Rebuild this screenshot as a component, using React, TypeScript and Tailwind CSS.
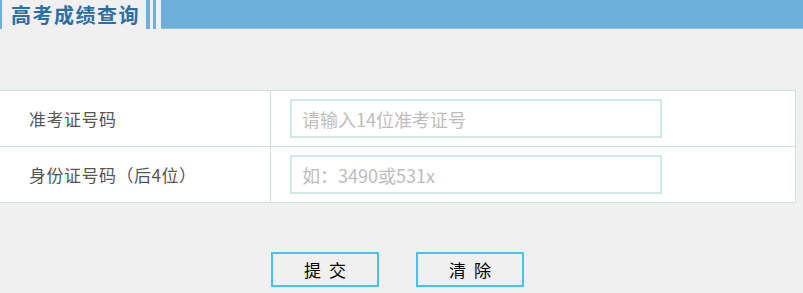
export default function App() {
  const rows = [
    { label: "准考证号码", placeholder: "请输入14位准考证号" },
    { label: "身份证号码（后4位）", placeholder: "如：3490或531x" },
  ];

  return (
    <div className="w-[803px] h-[293px] overflow-hidden bg-[#f0f0f0] font-['Microsoft_YaHei','Noto_Sans_CJK_SC',sans-serif]">
      {/* header strip */}
      <div className="flex h-[29px] items-stretch">
        <div className="w-[2px] bg-[#6fafdc]" />
        <div className="w-[144px] flex items-center pl-[9px] text-[20px] font-bold tracking-[1.5px] text-[#2b6ea3] leading-none">
          高考成绩查询
        </div>
        <div className="w-[4px] bg-[#6fafdc]" />
        <div className="w-[3px]" />
        <div className="w-[3px] bg-[#6fafdc]" />
        <div className="w-[5px]" />
        <div className="flex-1 bg-[#6fafdc] border-b border-[#8fc0e3]" />
      </div>

      {/* form table */}
      <div className="mt-[61px] w-[796px] bg-white border border-l-0 border-[#cde3e3]">
        {rows.map((row, i) => (
          <div
            key={i}
            className={`grid grid-cols-[270px_1fr] ${i > 0 ? "border-t border-[#cde3e3]" : ""}`}
          >
            <div className="flex items-center pl-[29px] text-[17px] tracking-[0.5px] text-[#555]">
              {row.label}
            </div>
            <div className="border-l border-[#cde3e3] py-[8px] pl-[19px]">
              <input
                className="w-[372px] h-[39px] border-2 border-[#d2e8e8] px-[10px] text-[18px] text-[#555] placeholder:text-[#bdbdbd] outline-none bg-white"
                placeholder={row.placeholder}
              />
            </div>
          </div>
        ))}
      </div>

      {/* buttons */}
      <div className="flex gap-[37px] pl-[271px] mt-[49px]">
        <button className="w-[108px] h-[35px] border-2 border-[#3fc6ea] bg-[#f0f0f0] text-[17px] tracking-[2px] pl-[2px] text-black leading-none">
          提 交
        </button>
        <button className="w-[108px] h-[35px] border-2 border-[#3fc6ea] bg-[#f0f0f0] text-[17px] tracking-[2px] pl-[2px] text-black leading-none">
          清 除
        </button>
      </div>
    </div>
  );
}
